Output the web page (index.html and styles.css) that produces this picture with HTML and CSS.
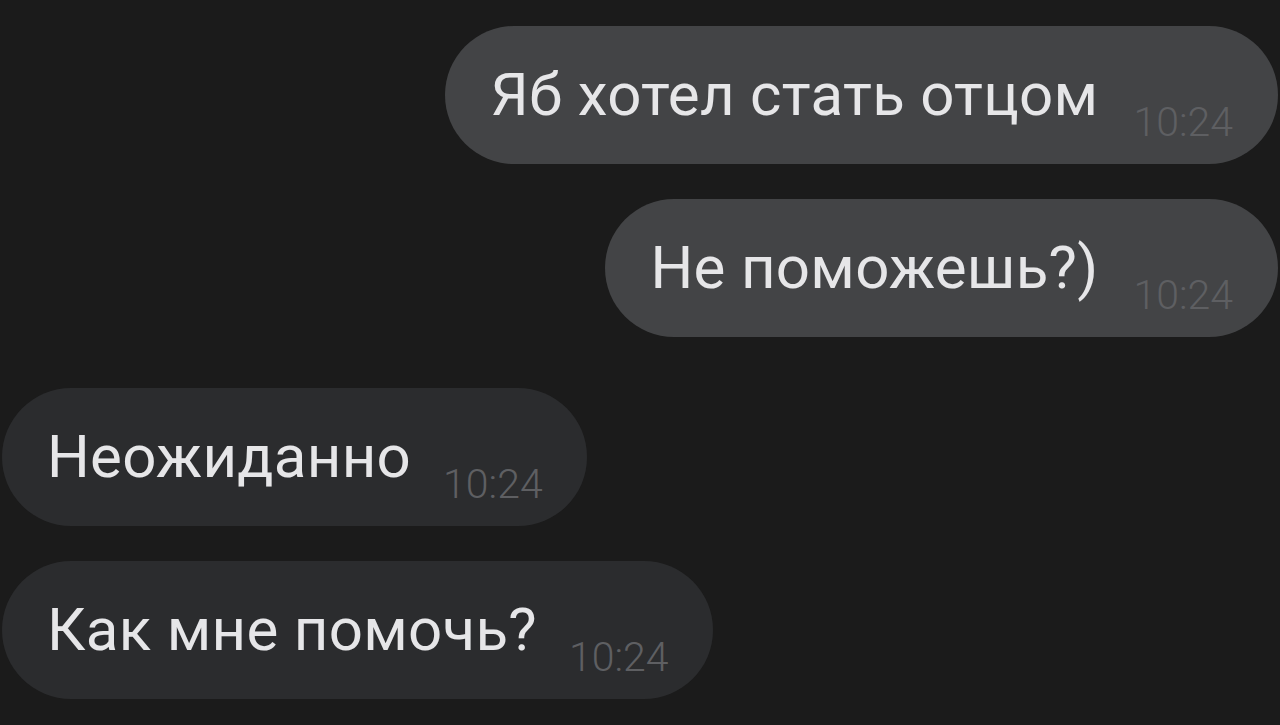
FILE: index.html
```html
<!DOCTYPE html>
<html lang="ru">
<head>
  <meta charset="UTF-8" />
  <meta name="viewport" content="width=device-width, initial-scale=1.0"/>
  <title>Чат</title>
  <link rel="stylesheet" href="styles.css">
</head>
<body>
  <div class="chat">
    <div class="msg out">Яб хотел стать отцом<span class="time">10:24</span></div>
    <div class="msg out">Не поможешь?)<span class="time">10:24</span></div>
    <div class="msg in gap">Неожиданно<span class="time">10:24</span></div>
    <div class="msg in">Как мне помочь?<span class="time">10:24</span></div>
  </div>
</body>
</html>
```
FILE: styles.css
```css
* { box-sizing: border-box; }
body {
  margin: 0; padding: 0;
  background: #1b1b1b;
  font-family: Roboto, "Noto Sans", sans-serif;
  height: 725px; overflow: hidden;
}
.chat {
  display: flex; flex-direction: column;
  gap: 35px;
  padding: 26px 2px 0 2px;
}
.msg {
  height: 138px; line-height: 138px;
  padding: 0 45px 0 45px;
  border-radius: 69px;
  font-size: 60px; letter-spacing: 0.3px; color: #e6e6e8;
  white-space: nowrap;
}
.msg.out { align-self: flex-end; background: #434446; }
.msg.in { align-self: flex-start; background: #2b2c2e; padding-right: 44px; }
.msg.gap { margin-top: 16px; }
.time {
  font-size: 41px; font-weight: 300; line-height: 0; letter-spacing: 0;
  vertical-align: -21px;
  margin-left: 35px;
  color: #5e5f62;
}
.msg.in .time { margin-left: 32px; }
```
